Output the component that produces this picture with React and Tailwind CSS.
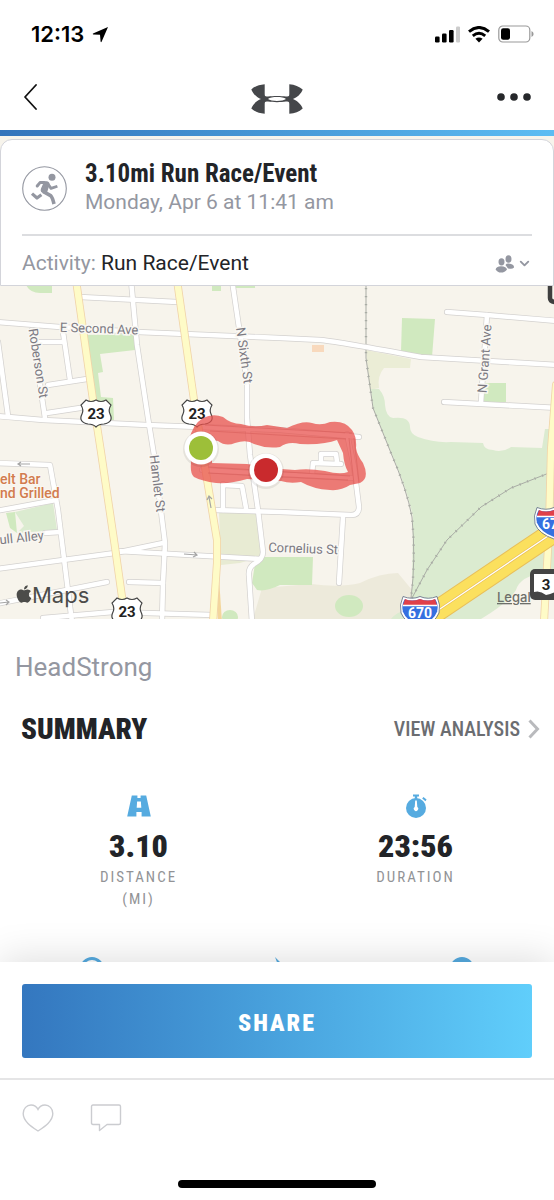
import React from 'react';
import { ChevronDown } from 'lucide-react';
import { FaApple } from 'react-icons/fa';

const whiteRoads = [
  'M-4 322 L60 327 L138 332 L280 338 L321 340 Q340 342 421 357 L558 365',
  'M80 297 L177 302',
  'M131 280 L137 345 L148 418 L154 455 L165 543 L163 583 L162 622',
  'M232 280 L247 382 L247 418 L250 455 L258 510 L263 552 Q263 559 254 564 Q248 568 249 576 L252 622',
  'M-4 416 L43 420 L147 425 L280 430 L359 437',
  'M-2 342 L8 416',
  'M32 330 L45 418',
  'M40 342 L63 342',
  'M63 332 L70 380',
  'M48 385 L87 379',
  'M47 413 L80 408',
  'M-4 463 L50 465 L58 510 L67 583 L72 622',
  'M-4 511 L56 500',
  'M-4 569 L63 560 L115 553 L163 543',
  'M118 551 L260 559',
  'M45 533 L60 532',
  'M-4 604 L107 582',
  'M129 582 L163 583',
  'M43 618 L113 612 L213 615',
  'M213 510 L280 512 L351 515 Q359 515 359 507 L354 467 L347 434',
  'M343 517 L339 583',
  'M223 484 L223 510',
  'M223 485 L242 486 L246 508',
  'M312 475 L313 463 L341 464',
  'M321 462 L321 454 L336 454 L337 462',
  'M202 470 L250 473 L352 478',
  'M447 312 L487 315 L558 321',
  'M487 315 L481 402',
  'M444 402 L558 408',
];

const yellowRoads = [
  'M76 280 L93 400 L101 452 L115 547 L122 597 L127 622',
  'M177 280 L194 400 L205 467 L217 540 L217 563 L213 622',
  'M556 385 L551 450 L549 530 L544 622',
];

const parks = [
  'M87 335 L135 334 L135 350 L100 354 L103 372 L98 373 L101 397 L113 398 L114 420 L97 420Z',
  'M26 285 H52 V293 H40 Q30 293 26 285Z',
  'M212 285 H221 V291 H212Z',
  'M235 285 H255 V288 H235Z',
  'M402 318 L435 319 L432 357 L401 352Z',
  'M485 383 H506 V402 H483Z',
  'M256 557 L313 557 L312 585 L280 585 Q266 592 257 590 L252 583Z',
  'M6 513 L15 512 L17 533 L10 528Z',
];

const rails = [
  'M366 280 V358 L373 408 L391 453 Q407 490 412 517 Q416 560 411 598',
  'M412 598 L427 570 L447 540 L481 507 L511 488 L549 473',
];

const mapLabels = [
  { text: 'E Second Ave', x: 99, y: 333, rotate: 2 },
  { text: 'Roberson St', x: 34, y: 364, rotate: 81 },
  { text: 'N Sixth St', x: 240, y: 356, rotate: 82 },
  { text: 'Hamlet St', x: 153, y: 484, rotate: 83 },
  { text: 'N Grant Ave', x: 489, y: 359, rotate: -86 },
  { text: 'Cornelius St', x: 303, y: 553, rotate: 2 },
  { text: 'ull Alley', x: 22, y: 542, rotate: -6 },
];

const UsShield = ({ x, y }) => (
  <g transform={`translate(${x} ${y})`}>
    <path
      d="M-10 -13 Q-5 -10 0 -13 Q5 -10 10 -13 L15 -8 Q12 -3 14 1 Q18 9 8 11 Q3 11 0 14 Q-3 11 -8 11 Q-18 9 -14 1 Q-12 -3 -15 -8Z"
      fill="#fff"
      stroke="#444"
      strokeWidth="1.2"
    />
    <text y="6" textAnchor="middle" fontSize="15" fontWeight="700" fill="#222">23</text>
  </g>
);

const InterstateShield = ({ x, y }) => (
  <g transform={`translate(${x} ${y})`}>
    <path d="M-16 -13 Q-8 -10 0 -13 Q8 -10 16 -13 Q20 -6 18 1 Q14 11 0 16 Q-14 11 -18 1 Q-20 -6 -16 -13Z" fill="#3570e0" stroke="#fff" strokeWidth="2" />
    <path d="M-15 -12 Q-8 -9 0 -12 Q8 -9 15 -12 L17 -6 H-17Z" fill="#e0404a" />
    <path d="M-17 -5.5 H17" stroke="#fff" strokeWidth="1.3" />
    <path d="M-17 -14.5 Q-8 -11 0 -14.5 Q8 -11 17 -14.5 Q21 -6 19 2 Q15 12 0 17 Q-15 12 -19 2 Q-21 -6 -17 -14.5Z" fill="none" stroke="#5d6b86" strokeWidth="0.8" />
    <text y="7" textAnchor="middle" fontSize="14" fontWeight="700" fill="#fff">670</text>
  </g>
);

const Marker = ({ x, y, color }) => (
  <g>
    <circle cx={x} cy={y + 1} r="18" fill="#000" opacity="0.07" />
    <circle cx={x} cy={y} r="16.5" fill="#fff" />
    <circle cx={x} cy={y} r="12" fill={color} />
  </g>
);

const RouteMap = () => (
  <svg viewBox="0 286 554 333" className="block w-full" role="img" aria-label="Route map" fontFamily="Roboto, sans-serif">
    <rect y="286" width="554" height="333" fill="#f7f4ec" />

    {/* Land cover */}
    <path d="M253 619 L262 588 L311 584 Q340 588 360 583 Q380 573 398 573 L412 590 V619Z" fill="#edeadb" />
    <path d="M366 350 L411 359 L410 368 L384 368 Q377 376 379 388 L370 390Z" fill="#ebedd6" />
    <path d="M219 512 L258 513 L262 556 L240 563 L221 565Z" fill="#e8ebd3" />
    <path
      d="M371 389 H379 Q385 396 385 405 Q386 417 393 418 Q410 416 410 427 Q410 434 418 437 Q434 443 451 442 L483 443 Q484 450 493 450 Q502 453 511 447 L542 448 L545 429 H554 V570 L546 572 Q520 576 516 590 Q508 603 481 619 H391 Q400 608 412 612 L412 590 L413 517 Q407 488 391 452 L373 408Z"
      fill="#dbebd0"
    />
    <path d="M15 512 L53 503 L57 530 L17 533 L24 526Z" fill="#dbebd0" />
    <g fill="#d0e9bf">
      {parks.map((d) => <path key={d} d={d} />)}
      <ellipse cx="349" cy="606" rx="14" ry="11" />
      <ellipse cx="230" cy="617" rx="8" ry="7" />
    </g>
    <path d="M312 345 H324 V352 H312Z" fill="#f8d9bd" />

    {/* Rail lines */}
    <g fill="none" stroke="#a9aca5">
      {rails.map((d) => <path key={d} d={d} strokeWidth="1" />)}
      {rails.map((d) => <path key={d} d={d} strokeWidth="2.4" strokeDasharray="1.2 6.8" />)}
    </g>

    {/* Streets */}
    <g fill="none" strokeLinecap="round" strokeLinejoin="round">
      {whiteRoads.map((d) => <path key={d} d={d} stroke="#d3d1cf" strokeWidth="6" />)}
      {whiteRoads.map((d) => <path key={d} d={d} stroke="#fff" strokeWidth="4.6" />)}
      <path d="M217 578 L220 622" stroke="#f3d69c" strokeWidth="4" />
      {yellowRoads.map((d) => <path key={d} d={d} stroke="#f0d3a8" strokeWidth="8" />)}
      {yellowRoads.map((d) => <path key={d} d={d} stroke="#fefbc7" strokeWidth="6.4" />)}
      <path d="M428 617 L560 528" stroke="#e8bf5a" strokeWidth="22" />
      <path d="M428 617 L560 528" stroke="#fbe05e" strokeWidth="20" />
      <path d="M428 617 L560 528" stroke="#e8bf5a" strokeWidth="2.6" />
      <path d="M428 617 L560 528" stroke="#fff" strokeWidth="1.2" />
    </g>

    {/* One-way arrows */}
    <g fill="none" stroke="#a5a5a5" strokeWidth="1.2">
      <path d="M30 464 H18 M21 462 L18 464 L21 466" />
      <path d="M184 554 L197 555 M194 552 L197 555 L193 557" />
      <path d="M211 508 L209 497 M207 500 L209 496 L212 499" />
      <path d="M0 603 L9 602 M6 600 L9 602 L6 605" />
    </g>

    <g fontSize="13" fill="#7c7a82" stroke="#f9f7f2" strokeWidth="3" paintOrder="stroke" textAnchor="middle">
      {mapLabels.map((l) => (
        <text key={l.text} x={l.x} y={l.y} transform={`rotate(${l.rotate} ${l.x} ${l.y})`}>{l.text}</text>
      ))}
    </g>
    <g fontSize="14" fontWeight="500" fill="#d27c4e" stroke="#faf7f1" strokeWidth="2" paintOrder="stroke">
      <text x="0" y="484">elt Bar</text>
      <text x="0" y="498">nd Grilled</text>
    </g>

    <UsShield x={96} y={413} />
    <UsShield x={197} y={413} />
    <UsShield x={127} y={611} />

    {/* Recorded route */}
    <path
      fillRule="evenodd"
      d="M189 440 Q193 424 203 418 Q213 413 223 417 Q231 424 241 424 Q254 428 267 425 L287 428 Q303 420 312 423 Q321 426 330 422 Q345 420 352 430 Q357 437 356 448 Q357 455 363 463 Q370 478 360 483 L350 485 Q341 491 330 490 Q313 489 301 482 Q290 484 281 481 L247 479 Q231 484 216 483 Q202 481 194 477 Q190 474 191 463Z
         M212 440 L218 441 Q226 447 235 443 Q247 439 254 444 Q267 449 280 447 Q288 441 300 444 Q325 445 337 440 L343 453 Q344 465 348 472 Q340 475 325 471 Q308 468 295 470 L281 469 L247 464 L212 463Z"
      fill="#e8504b"
      fillOpacity="0.74"
    />
    <g fill="none" stroke="#d95f5c" strokeWidth="0.9" opacity="0.7">
      <path d="M205 425 L352 433 M210 431 L346 439 M349 438 L354 484 M354 438 L359 482 M208 467 L350 476 M208 473 L348 480" />
    </g>
    <Marker x={201} y={448} color="#9dbf39" />
    <Marker x={266} y={470} color="#c92a2d" />

    <InterstateShield x={420} y={611} />
    <InterstateShield x={554} y={522} />

    <FaApple x={14} y={584} size={20} color="#4c4c4a" />
    <text x="32" y="603" fontSize="22" fill="#4c4c4a" fontFamily="Inter, sans-serif">Maps</text>
    <a href="#legal">
      <text x="497" y="602" fontSize="13" fontWeight="500" fill="#6d6f6a" textDecoration="underline" fontFamily="Inter, sans-serif">Legal</text>
    </a>
    <rect x="530" y="569" width="36" height="31" rx="5" fill="#444" />
    <path d="M534 574 H560 V588 Q554 594 546 595 Q540 590 534 592Z" fill="#fff" />
    <text x="546" y="590" textAnchor="middle" fontSize="15" fontWeight="700" fill="#222">3</text>
    <path d="M550 284 V298 Q550 302 556 302" fill="none" stroke="#3f3f3f" strokeWidth="4.5" />
  </svg>
);

const StatusBar = () => (
  <div className="flex h-16 items-center justify-between pt-1 pr-5 pl-[31px]">
    <div className="flex items-center gap-2">
      <span className="font-[Inter,sans-serif] text-[22px] font-semibold">12:13</span>
      <svg width="17" height="17" viewBox="0 0 17 17" aria-hidden="true">
        <path d="M16 1 L1 7.6 Q0.4 8.2 1.2 8.4 L8 8.8 L8.6 15.6 Q8.9 16.6 9.6 15.8Z" />
      </svg>
    </div>
    <div className="flex items-center gap-2">
      <svg width="25" height="17" viewBox="0 0 25 17" aria-hidden="true">
        <rect x="0" y="10.5" width="4.6" height="6" rx="1.2" />
        <rect x="7" y="7.5" width="4.6" height="9" rx="1.2" />
        <rect x="14" y="4" width="4.6" height="12.5" rx="1.2" />
        <rect x="21" y="0.5" width="4.2" height="16" rx="1.2" fill="#ccc" />
      </svg>
      <svg width="22" height="17" viewBox="0 0 22 17" fill="none" stroke="#000" strokeWidth="3" aria-hidden="true">
        <path d="M1 5.6 Q11 -2.6 21 5.6" />
        <path d="M4.8 9.8 Q11 4.8 17.2 9.8" />
        <path d="M11 16.5 L7.4 12.8 Q11 10 14.6 12.8Z" fill="#000" stroke="none" />
      </svg>
      <svg width="36" height="18" viewBox="0 0 36 18" aria-hidden="true">
        <rect x="0.8" y="1" width="31" height="16" rx="4" fill="none" stroke="#999" strokeWidth="1.2" />
        <rect x="3" y="3.2" width="9" height="11.6" rx="2.2" />
        <path d="M33.5 6 Q35.6 7 35.6 9 Q35.6 11 33.5 12Z" fill="#999" />
      </svg>
    </div>
  </div>
);

const Header = () => (
  <header className="shrink-0">
    <StatusBar />
    <div className="grid h-[66px] grid-cols-3 items-center px-[22px]">
      <button aria-label="Back" className="justify-self-start">
        <svg width="16" height="26" viewBox="0 0 16 26" fill="none" stroke="#111" strokeWidth="1.8" strokeLinecap="round" strokeLinejoin="round">
          <path d="M14 1 L3 13 L14 25" />
        </svg>
      </button>
      <svg className="mt-1 justify-self-center" width="52" height="30" viewBox="0 0 52 30" fill="#45474a" fillRule="evenodd" role="img" aria-label="Logo">
        <path d="M.3 5.5 C4 2.2 8 .8 13.7 .2 V10 C13.7 12.2 14.5 12.8 17 12.4 C22 11.7 30 11.7 35 12.4 C37.5 12.8 38.3 12.2 38.3 10 V.2 C44 .8 48 2.2 51.7 5.5 C50 10 46 13.5 42 15 C46 16.5 50 20 51.7 24.5 C48 27.8 44 29.2 38.3 29.8 V20 C38.3 17.8 37.5 17.2 35 17.6 C30 18.3 22 18.3 17 17.6 C14.5 17.2 13.7 17.8 13.7 20 V29.8 C8 29.2 4 27.8 .3 24.5 C2 20 6 16.5 10 15 C6 13.5 2 10 .3 5.5Z M17 15 C20 12.4 32 12.4 35 15 C32 17.6 20 17.6 17 15Z" />
      </svg>
      <button aria-label="More options" className="justify-self-end">
        <svg width="36" height="10" viewBox="0 0 36 10" fill="#26282b">
          <circle cx="5" cy="5" r="3.8" />
          <circle cx="18" cy="5" r="3.8" />
          <circle cx="31" cy="5" r="3.8" />
        </svg>
      </button>
    </div>
    <div className="h-1.5 bg-linear-to-r from-[#3374bb] to-[#5dbdf3]"></div>
  </header>
);

const WorkoutCard = () => (
  <section className="bg-[#f7f4ec] pt-[3px]">
    <div className="rounded-t-xl border border-[#d3d4da] bg-white px-[21px]">
      <div className="flex items-start gap-[18px] border-b-2 border-[#dcdde0] pt-4 pb-[22px]">
        <svg className="mt-2.5 shrink-0" width="45" height="45" viewBox="0 0 45 45" fill="none" stroke="#9497a1" aria-hidden="true">
          <circle cx="22.5" cy="22.5" r="21.8" strokeWidth="1.1" />
          <circle cx="30" cy="11.2" r="3.5" fill="#9497a1" stroke="none" />
          <path d="M18 15 L25 15.2 Q28 16 27.4 19 L25.4 25.6 L23 28 L19.2 26 Q18.2 24.6 19 22.6 L21 18Z" fill="#9497a1" stroke="none" />
          <path d="M15.2 20 L18 16.6 L22 16.6" strokeWidth="3" strokeLinecap="round" strokeLinejoin="round" />
          <path d="M26 18 L29 22.4 L35.4 20.2" strokeWidth="2.8" strokeLinejoin="round" />
          <path d="M21 25.4 L28.6 29.6 Q30.4 31.4 32 38" strokeWidth="3.6" strokeLinejoin="round" />
          <path d="M10 27.6 L15 32 L19.4 28.8" strokeWidth="3.2" strokeLinejoin="round" />
        </svg>
        <div>
          <h1 className="text-[25px] leading-9 font-bold text-[#222428]">3.10mi Run Race/Event</h1>
          <p className="font-[Roboto,sans-serif] text-[21px] leading-5 text-[#9497a1]">Monday, Apr 6 at 11:41 am</p>
        </div>
      </div>
      <div className="flex h-[49px] items-center justify-between pt-1.5 font-[Roboto,sans-serif] text-[21px]">
        <p className="text-[#9497a1]">Activity: <span className="text-[#222428]">Run Race/Event</span></p>
        <button aria-label="Change privacy" className="flex items-center gap-0.5 text-[#9497a1]">
          <svg width="20" height="18" viewBox="0 0 20 18" fill="currentColor">
            <ellipse cx="13.5" cy="4" rx="3" ry="3.8" />
            <path d="M10.5 10 Q11.5 8.4 13.6 8.6 Q19.5 9.5 19 12.5 Q17 14.8 12.8 13.2Z" />
            <ellipse cx="6.5" cy="6.8" rx="3" ry="3.6" />
            <path d="M0.6 14.5 Q1 11.5 6 11.2 Q11.5 11.5 12 14.5 Q10 17.6 6 17.6 Q2.5 17.6 0.6 14.5Z" />
          </svg>
          <ChevronDown size={15} strokeWidth={3} />
        </button>
      </div>
    </div>
  </section>
);

const RoadIcon = () => (
  <svg width="24" height="22" viewBox="0 0 24 22" fill="#56abe0" fillRule="evenodd" aria-hidden="true">
    <path d="M4.8 0.5 H10.4 V3 H13.6 V0.5 H19.2 L23.8 21.5 H14.6 V17 H9.4 V21.5 H0.2Z M10.1 6.5 L9.7 12.8 H14.3 L13.9 6.5Z" />
  </svg>
);

const StopwatchIcon = () => (
  <svg width="24" height="24" viewBox="0 0 24 24" fill="#56abe0" aria-hidden="true">
    <circle cx="12" cy="14" r="10" />
    <path d="M9 0.5 H15 V2.5 H13.2 V5 H10.8 V2.5 H9Z" />
    <path d="M18.2 4.6 L19.4 3 L22.6 5.4 L21.4 7.2Z" />
    <path d="M11.2 6.5 H12.8 L13.3 13 A2.2 2.2 0 1 1 10.7 13Z" fill="#fff" />
  </svg>
);

const stats = [
  { value: '3.10', label: 'DISTANCE', unit: '(MI)', Icon: RoadIcon },
  { value: '23:56', label: 'DURATION', Icon: StopwatchIcon },
];

const Summary = () => (
  <section className="pt-[34px]">
    <p className="px-[15px] font-[Roboto,sans-serif] text-[26px] leading-7 text-[#9497a1]">HeadStrong</p>
    <div className="mt-[30px] flex items-center justify-between pr-[14px] pl-[21px]">
      <h2 className="text-[29px] leading-9 font-black text-[#222428]">SUMMARY</h2>
      <a href="#analysis" className="flex items-center gap-2 text-[20px] font-medium text-[#6b6d71]">
        VIEW ANALYSIS
        <svg width="12" height="20" viewBox="0 0 12 20" fill="none" stroke="#b9babd" strokeWidth="3" aria-hidden="true">
          <path d="M1.5 1.5 L9.5 10 L1.5 18.5" />
        </svg>
      </a>
    </div>
    <div className="mt-[47px] grid grid-cols-2">
      {stats.map(({ value, label, unit, Icon }) => (
        <div key={label} className="flex flex-col items-center">
          <div className="flex h-6 items-center"><Icon /></div>
          <p className="mt-2 text-[32px] leading-10 font-black text-[#222428]">{value}</p>
          <p className="text-center text-[15px] leading-[22px] tracking-[2px] text-[#929396]">
            {label}
            {unit && <span className="block">{unit}</span>}
          </p>
        </div>
      ))}
    </div>
    <div className="mt-[47px] grid grid-cols-3 justify-items-center">
      <svg width="24" height="24" viewBox="0 0 24 24" fill="none" stroke="#56abe0" strokeWidth="3" aria-hidden="true">
        <circle cx="12" cy="12" r="10.5" />
      </svg>
      <svg width="24" height="24" viewBox="0 0 24 24" fill="#56abe0" aria-hidden="true">
        <path d="M10 0 L16 6 L20 14 L14 23 L8 20 L13 8Z" />
      </svg>
      <svg width="24" height="24" viewBox="0 0 24 24" fill="#56abe0" aria-hidden="true">
        <circle cx="12" cy="12" r="12" />
      </svg>
    </div>
  </section>
);

const Footer = () => (
  <footer className="relative shrink-0 bg-white shadow-[0_-4px_36px_rgba(0,0,0,0.13)]">
    <div className="border-b-2 border-[#e5e5e6] px-[22px] pt-[22px] pb-5">
      <button className="h-[74px] w-full rounded-[3px] bg-linear-to-r from-[#3477bf] to-[#60cefb] pt-1 text-[24px] font-black tracking-[2px] text-white">
        SHARE
      </button>
    </div>
    <div className="flex gap-[36px] px-[22px] pt-6">
      <button aria-label="Like">
        <svg width="32" height="28" viewBox="0 0 32 28" fill="none" stroke="#cbccd0" strokeWidth="1.4">
          <path d="M16 27 C10 23 1.2 17.5 1.2 9.5 C1.2 4.5 4.8 1 9 1 C12.5 1 14.8 3 16 5.4 C17.2 3 19.5 1 23 1 C27.2 1 30.8 4.5 30.8 9.5 C30.8 17.5 22 23 16 27Z" />
        </svg>
      </button>
      <button aria-label="Comment">
        <svg width="32" height="28" viewBox="0 0 32 28" fill="none" stroke="#cbccd0" strokeWidth="1.4" strokeLinejoin="round">
          <path d="M3 1 H29 Q30.5 1 30.5 2.5 V19 Q30.5 20.5 29 20.5 H17 L9.5 26.5 V20.5 H3 Q1.5 20.5 1.5 19 V2.5 Q1.5 1 3 1Z" />
        </svg>
      </button>
    </div>
    <div className="flex justify-center pt-12 pb-3">
      <div className="h-2 w-[198px] rounded-full bg-black"></div>
    </div>
  </footer>
);

const App = () => (
  <div className="flex h-screen flex-col overflow-hidden bg-white font-['Roboto_Condensed',Roboto,sans-serif]">
    <Header />
    <main className="min-h-0 flex-1 overflow-hidden">
      <WorkoutCard />
      <RouteMap />
      <Summary />
    </main>
    <Footer />
  </div>
);

export default App;
